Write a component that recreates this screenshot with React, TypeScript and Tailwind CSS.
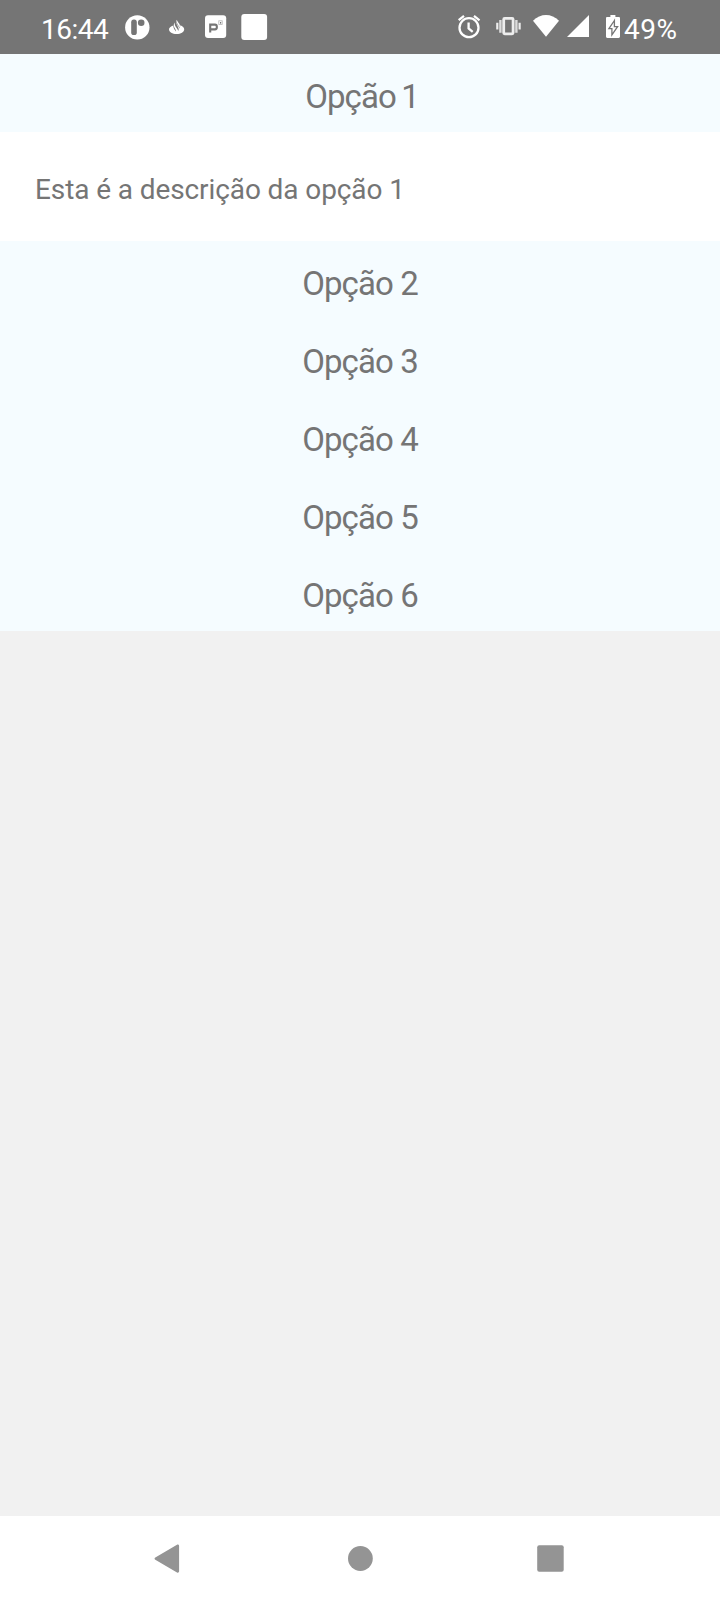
import type { ReactNode } from "react";

const options = [
  { title: "Opção 1", description: "Esta é a descrição da opção 1", spacing: "tracking-[-0.9px] [word-spacing:-2px] pl-[4px]" },
  { title: "Opção 2", spacing: "tracking-[-0.9px]" },
  { title: "Opção 3", spacing: "tracking-[-0.9px]" },
  { title: "Opção 4", spacing: "tracking-[-0.9px]" },
  { title: "Opção 5", spacing: "tracking-[-0.9px]" },
  { title: "Opção 6", spacing: "tracking-[-0.9px]" },
];

function Icon({ x, width, children }: { x: number; width: number; children: ReactNode }) {
  return (
    <svg width={width} height={54} viewBox={`${x} 0 ${width} 54`} className="block shrink-0" fill="white">
      {children}
    </svg>
  );
}

function StatusBar() {
  return (
    <header className="flex h-[54px] w-full shrink-0 bg-[#757575] text-white">
      <span className="w-[82px] shrink-0 pl-[41px] pt-[13px] text-[28px] leading-[33px] tracking-[-0.5px] whitespace-nowrap">16:44</span>
      <Icon x={82} width={78}>
        <circle cx="137.3" cy="27.4" r="12.2" />
        <rect x="131.2" y="19.6" width="5.6" height="15.4" rx="2.6" fill="#757575" />
        <circle cx="141.2" cy="22.8" r="3.3" fill="#757575" />
      </Icon>
      <Icon x={160} width={35}>
        <path d="M173.3 25.4C170.6 26.3 169 27.7 169 29.3c0 2.7 3.4 4.8 7.6 4.8s7.6-2.1 7.6-4.8c0-1.7-1.6-3.2-4-4 .1 1.3-.2 2.2-.8 3.3-.4-2.5-3.9-5.1-2.9-8.6-1.6 3.1 2 6.5 2.2 9.5l-.5 1.5c-.3-2.7-4.6-5.2-3.2-8.5-1.8 1.7-1.4 3.4-.5 5.2.8 1.4 1.6 2.5 1.5 3.8-1.2-1.6-2.8-3.5-2.7-6.1z" />
        <path d="M176.7 19.8c-1 3 2 5.1 2.7 8.2.9-1.8.6-3-.3-4.4-.8-1.2-1.8-2.2-2.4-3.8z" />
      </Icon>
      <Icon x={195} width={38}>
        <rect x="205" y="15.2" width="21.2" height="22.8" rx="3" />
        <path d="M210.2 32.6v-8h4.8c2.5 0 2.5 4.8 0 4.8h-4.8" fill="none" stroke="#757575" strokeWidth="2.1" />
        <rect x="218.8" y="20.8" width="3.4" height="3.8" fill="none" stroke="#b5b5b5" strokeWidth="0.8" />
        <rect x="220" y="22" width="1.2" height="1.6" fill="#757575" />
      </Icon>
      <Icon x={233} width={215}>
        <rect x="241.3" y="14" width="25.8" height="26" rx="3" />
      </Icon>
      <Icon x={448} width={40}>
        <circle cx="469" cy="27.7" r="9.5" fill="none" stroke="white" strokeWidth="2.3" />
        <path d="M468.6 22.5v6l4.1 3.3M458.7 20.2l5.3-4.3M474 15.9l5.5 4.4" fill="none" stroke="white" strokeWidth="2.3" />
      </Icon>
      <Icon x={488} width={40}>
        <rect x="503.7" y="18.4" width="9.4" height="15.4" rx="1" fill="none" stroke="#eeeeee" strokeWidth="2.8" />
        <path d="M500.4 20v12.8M516.4 20v12.8" stroke="#dddddd" strokeWidth="2.4" />
        <path d="M497.3 22.8v6.8M519.6 22.8v6.8" stroke="#eeeeee" strokeWidth="2.2" />
      </Icon>
      <Icon x={528} width={35}>
        <path d="M533 20.8C540.6 13.1 551.4 13.1 559 20.8L546 36.7z" />
      </Icon>
      <Icon x={563} width={34}>
        <path d="M589 15v22h-22z" />
      </Icon>
      <Icon x={597} width={27}>
        <path d="M610.4 15h5v1.9h3.2c.9 0 1.4.5 1.4 1.4v18.3c0 .9-.5 1.4-1.4 1.4h-11.2c-.9 0-1.4-.5-1.4-1.4V18.3c0-.9.5-1.4 1.4-1.4h3z" />
        <path d="M614.4 20.5l-5.5 8.2h3v6.2l5.7-8.3h-3.2z" fill="white" stroke="#757575" strokeWidth="1.3" />
      </Icon>
      <span className="pt-[13px] text-[28px] leading-[33px] tracking-[0.5px]">49%</span>
    </header>
  );
}

export default function App() {
  return (
    <div className="flex h-[1600px] w-[720px] flex-col overflow-hidden bg-[#f1f1f1] font-['Roboto','Noto_Sans',sans-serif]">
      <StatusBar />
      <main className="flex-1 text-[#757575]">
        {options.map((option) => (
          <section key={option.title}>
            <h2 className={`flex h-[78px] justify-center bg-[#f5fcff] pt-[24px] text-[33px] leading-[38px] font-normal ${option.spacing}`}>
              {option.title}
            </h2>
            {option.description && (
              <p className="h-[109px] bg-white pt-[41px] pl-[35px] text-[28px] leading-[33px] tracking-[-0.1px]">{option.description}</p>
            )}
          </section>
        ))}
      </main>
      <nav className="flex h-[84px] shrink-0 bg-white text-[#949494]">
        <svg width="720" height="84" viewBox="0 0 720 84" fill="currentColor">
          <path d="M177 28.8c1-.6 2.1 0 2.1 1.2v25.2c0 1.2-1.1 1.8-2.1 1.2l-21.7-12.7c-1-.6-1-1.7 0-2.3z" />
          <circle cx="360.4" cy="42.5" r="12.4" />
          <rect x="537.2" y="29.3" width="26.5" height="26.5" rx="2" />
        </svg>
      </nav>
    </div>
  );
}
